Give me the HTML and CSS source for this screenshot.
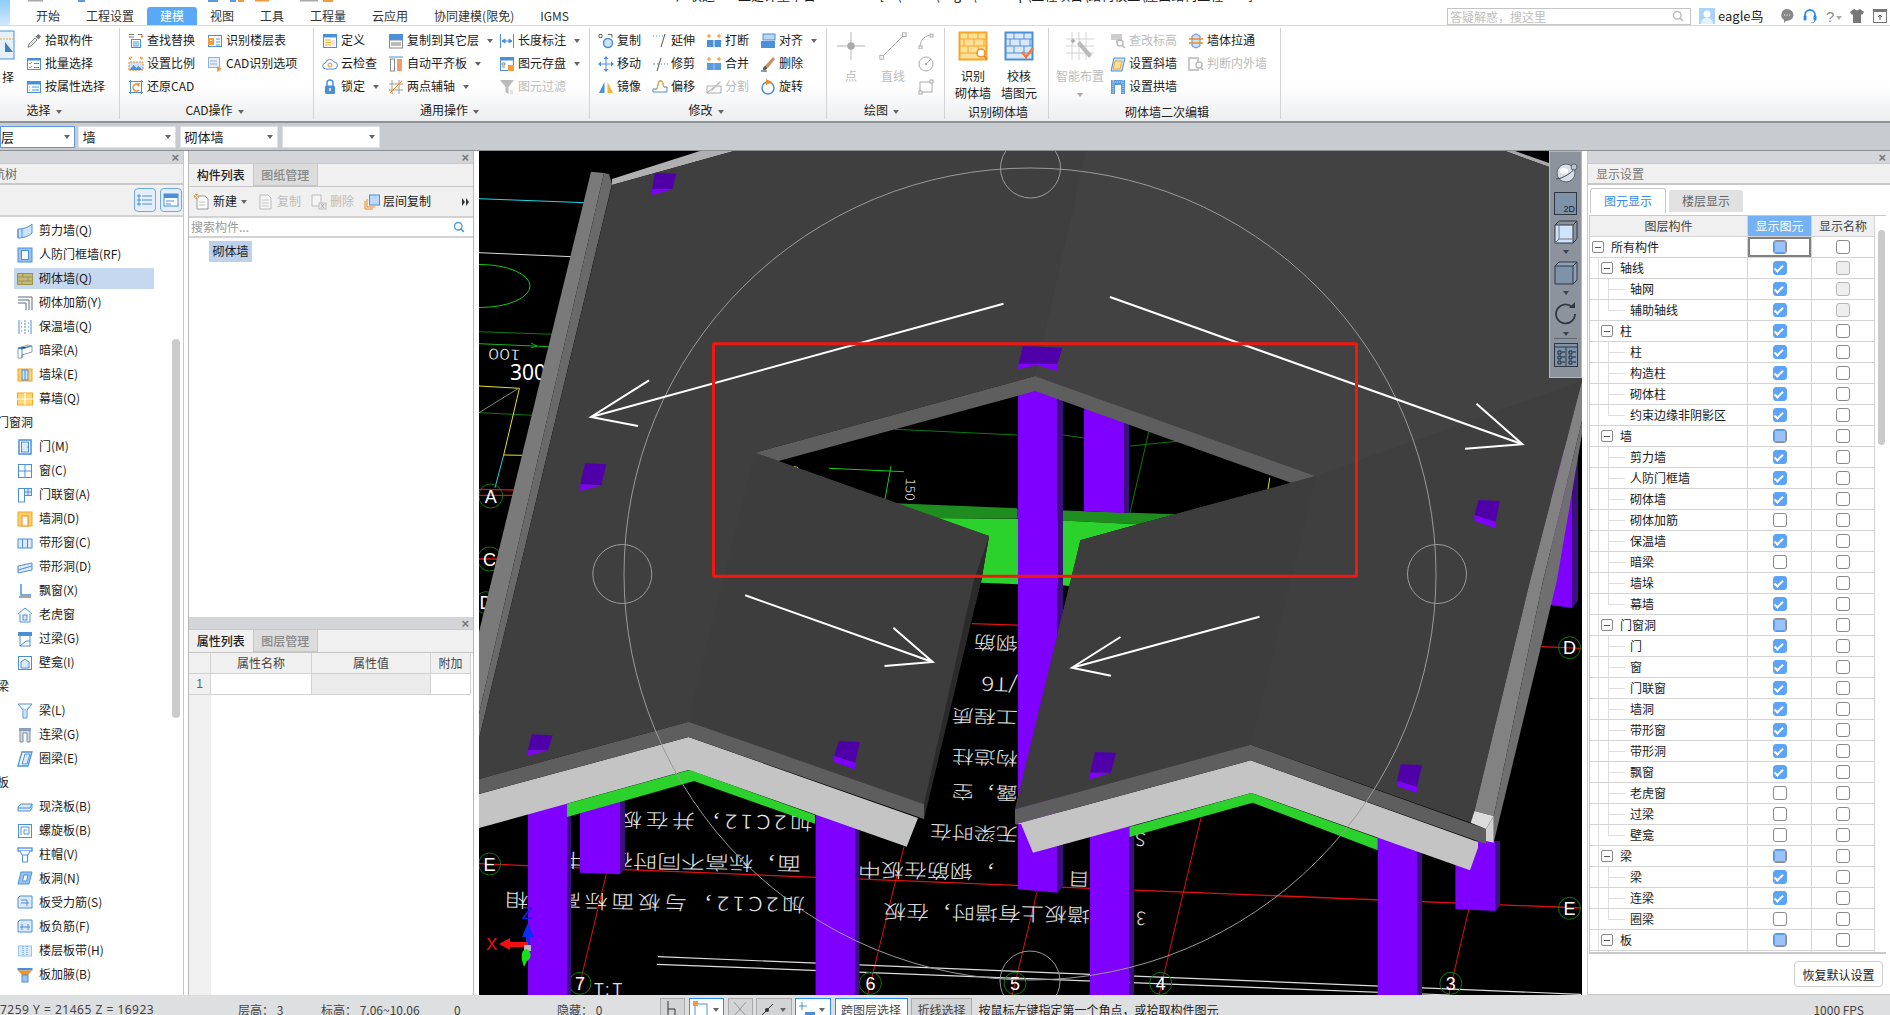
FILE: index.html
```html
<!DOCTYPE html>
<html lang="zh-CN">
<head>
<meta charset="utf-8">
<title>建模</title>
<link rel="stylesheet" href="styles.css">
</head>
<body>
<svg class="defs" xmlns="http://www.w3.org/2000/svg">
<symbol id="pick" viewBox="0 0 16 16"><path d="M2 14.500l1-3.500 6-6 2 2-6 6z" fill="#e8e8e8" stroke="#8a8a8a"/><path d="M9.500 3.500l3-2.500 2.500 2.500-2.500 3z" fill="#777"/></symbol>
<symbol id="batch" viewBox="0 0 16 16"><rect x="1.500" y="2.500" width="13" height="11" fill="#fff" stroke="#4a90d9"/><path d="M1.500 2.500h13v2h-13z" fill="#4a90d9"/><path d="M3 7l1 1 2-2M3 11l1 1 2-2" stroke="#f08a24" fill="none"/><path d="M8 7.500h5M8 11.500h5" stroke="#4a90d9"/></symbol>
<symbol id="attr" viewBox="0 0 16 16"><rect x="1.500" y="2.500" width="13" height="11" fill="#fff" stroke="#4a90d9"/><path d="M1.500 2.500h13v3h-13z" fill="#4a90d9"/><path d="M3 8h1M3 11h1M6 8h7M6 11h7" stroke="#4a90d9"/></symbol>
<symbol id="replace" viewBox="0 0 16 16"><path d="M1 1.500h5M1 4h5M10 1.500h4v3" stroke="#777" fill="none"/><path d="M12.500 3l1.500 2 1.500-2z" fill="#f08a24"/><rect x="3.500" y="6.500" width="9" height="8" fill="#fff" stroke="#4a90d9"/><path d="M5 9h6M5 11h6M5 13h6" stroke="#4a90d9"/></symbol>
<symbol id="scale" viewBox="0 0 16 16"><path d="M1 2h3l-1-1.500M1 2l2 1.500M15 2h-3l1-1.500M15 2l-2 1.500" stroke="#f08a24" fill="none"/><path d="M1 14V6h14v8z" fill="#cfe2f7" stroke="#f08a24" stroke-dasharray="2 1"/><path d="M1.500 14l4-5 3 3 2-2 4 4z" fill="#4a90d9"/></symbol>
<symbol id="restore" viewBox="0 0 16 16"><path d="M2.500 1v14M13.500 1v14M1 2.500h14M1 13.500h14" stroke="#4a90d9"/><path d="M11 6a3.500 3.500 0 1 0 0 5" stroke="#f08a24" stroke-width="1.500" fill="none"/><path d="M8 5l4-1-1 4z" fill="#f08a24"/></symbol>
<symbol id="floortbl" viewBox="0 0 16 16"><rect x="1.500" y="2.500" width="13" height="11" fill="#fff" stroke="#4a90d9"/><rect x="1" y="5" width="6" height="7" fill="#f59a3a"/><path d="M3 7h2v1H3z" fill="#fff"/><path d="M9 6h4M9 9h4M9 12h4" stroke="#4a90d9"/></symbol>
<symbol id="cadopt" viewBox="0 0 16 16"><rect x="1.500" y="1.500" width="11" height="10" fill="#e6eef9" stroke="#8fb2dd"/><path d="M3 5h7M3 8h7" stroke="#8fb2dd"/><path d="M10 10l5 3-5 3z" fill="#f59a3a"/></symbol>
<symbol id="define" viewBox="0 0 16 16"><rect x="1.500" y="1.500" width="13" height="13" fill="#fff" stroke="#4a90d9"/><path d="M1.500 1.500h13v3h-13z" fill="#4a90d9"/><path d="M3 7h6M3 9.500h6M3 12h6" stroke="#f5a623"/><path d="M10 7h3v5h-3z" fill="#fdd"/></symbol>
<symbol id="cloud" viewBox="0 0 16 16"><path d="M4 13a3 3 0 0 1-.500-6 4.500 4.500 0 0 1 8.500-1 3.500 3.500 0 0 1 0 7z" fill="#fff" stroke="#4a90d9"/><circle cx="8" cy="9" r="2" fill="none" stroke="#f08a24"/></symbol>
<symbol id="lock" viewBox="0 0 16 16"><rect x="3" y="6.500" width="10" height="8.500" rx="1.500" fill="#4a90d9"/><path d="M5 7V4a3 3 0 0 1 6 0v3" stroke="#4a90d9" stroke-width="1.500" fill="none"/><rect x="7.300" y="9" width="1.500" height="3" fill="#fff"/></symbol>
<symbol id="copyto" viewBox="0 0 16 16"><rect x="1" y="1" width="14" height="6" fill="#4a90d9"/><rect x="1.500" y="7" width="13" height="8" fill="#fff" stroke="#888"/><rect x="3" y="9" width="10" height="4" fill="#bbb"/></symbol>
<symbol id="alignb" viewBox="0 0 16 16"><path d="M1 1h14" stroke="#4a90d9"/><rect x="2.500" y="3" width="4" height="12" fill="#fff" stroke="#888"/><rect x="9" y="3" width="5" height="12" fill="#f59a6a"/></symbol>
<symbol id="axis2" viewBox="0 0 16 16"><path d="M4 1v14M11 1v14M1 5h14M1 11h14" stroke="#999"/><path d="M2 14L14 2" stroke="#f08a24"/></symbol>
<symbol id="dim" viewBox="0 0 16 16"><path d="M1.500 1v14M14.500 1v14" stroke="#4a90d9"/><path d="M3 8h10M3 8l3-2v4zM13 8l-3-2v4z" stroke="#4a90d9" fill="#4a90d9"/></symbol>
<symbol id="save" viewBox="0 0 16 16"><rect x="1.500" y="1.500" width="13" height="13" fill="#fff" stroke="#4a90d9"/><path d="M1.500 1.500h13v3h-13z" fill="#4a90d9"/><path d="M3 7h3v2H3zM3 11h3" stroke="#888" fill="none"/><rect x="9" y="9" width="6" height="6" fill="#f59a3a"/></symbol>
<symbol id="filter" viewBox="0 0 16 16"><path d="M1 1h14L9.500 8v7l-3-2V8z" fill="#bbb"/><path d="M11 12h3M11 14h3" stroke="#ccc"/></symbol>
<symbol id="copy" viewBox="0 0 16 16"><path d="M1 1.500h3v3H1zM10 1.500h4v3" stroke="#666" fill="none"/><circle cx="10" cy="10" r="4.500" fill="#cfe2f7" stroke="#4a90d9" stroke-width="1.500"/></symbol>
<symbol id="move" viewBox="0 0 16 16"><path d="M8 2v12M2 8h12" stroke="#4a90d9"/><path d="M8 0l2.500 3h-5zM8 16l-2.500-3h5zM0 8l3-2.500v5zM16 8l-3-2.500v5z" fill="#4a90d9"/></symbol>
<symbol id="mirror" viewBox="0 0 16 16"><path d="M1 14L6.500 3v11z" fill="#4a90d9"/><path d="M15 14L9.500 3v11z" fill="#f5b43a"/></symbol>
<symbol id="extend" viewBox="0 0 16 16"><path d="M1 3h1M4 3h1M7 3h1M10 3h1" stroke="#4a90d9"/><path d="M13 1L9 14" stroke="#555"/></symbol>
<symbol id="trim" viewBox="0 0 16 16"><path d="M1 8h2M5 8h2" stroke="#4a90d9"/><path d="M9 2L5 15" stroke="#555"/><path d="M9 8h1M12 8h1M15 8h1" stroke="#4a90d9"/></symbol>
<symbol id="offset" viewBox="0 0 16 16"><path d="M1 10h4l2-8h3l2 6h3v5H1z" fill="#fff" stroke="#4a90d9"/><path d="M3 8h2l2-8h3l2 6h2" stroke="#f5a623" fill="none" transform="translate(0 2)"/></symbol>
<symbol id="brk" viewBox="0 0 16 16"><path d="M1 3h4M3 1v4M11 3h4M13 1v4" stroke="#f08a24"/><rect x="1" y="7" width="6.500" height="7" fill="#4a90d9"/><rect x="8.500" y="7" width="6.500" height="7" fill="#4a90d9"/></symbol>
<symbol id="merge" viewBox="0 0 16 16"><path d="M1 3h4M3 1v4M11 3h4M13 1v4" stroke="#f08a24"/><rect x="1" y="7" width="14" height="7" fill="#5a9be0"/><path d="M8 7v7" stroke="#9cc3ee"/></symbol>
<symbol id="split" viewBox="0 0 16 16"><path d="M1 7h14v7H1zM1 14L8 8" stroke="#aaa" fill="none"/><path d="M5 11L14 2l1 1-9 9z" fill="#bbb"/></symbol>
<symbol id="alignx" viewBox="0 0 16 16"><rect x="3" y="1" width="12" height="6" fill="#bcd5f2" stroke="#4a90d9"/><rect x="1" y="8" width="14" height="7" fill="#4a90d9"/></symbol>
<symbol id="del" viewBox="0 0 16 16"><path d="M1 15h6" stroke="#333"/><path d="M13 1l2 2-7 9-3-2z" fill="#c89060"/><path d="M3 14c0-3 1-4 2.500-4l2 2c-1 1.500-2 2-4.500 2z" fill="#555"/></symbol>
<symbol id="rotate" viewBox="0 0 16 16"><circle cx="8" cy="9" r="6" fill="none" stroke="#4a90d9" stroke-width="1.500"/><path d="M6 0l6 3-6 3z" fill="#f08a24"/></symbol>
<symbol id="pointd" viewBox="0 0 32 32"><path d="M16 1v30M1 16h30" stroke="#ccc" stroke-width="1.500"/><circle cx="16" cy="16" r="4" fill="#aaa"/></symbol>
<symbol id="lined" viewBox="0 0 32 32"><path d="M4 28L28 4" stroke="#aaa"/><rect x="2" y="26" width="4" height="4" fill="#fff" stroke="#aaa"/><rect x="26" y="2" width="4" height="4" fill="#fff" stroke="#aaa"/></symbol>
<symbol id="arcd" viewBox="0 0 16 16"><path d="M2 14C2 7 7 2 14 2" stroke="#aaa" fill="none"/><rect x="1" y="13" width="3" height="3" fill="#fff" stroke="#aaa"/><rect x="12" y="1" width="3" height="3" fill="#fff" stroke="#aaa"/></symbol>
<symbol id="circd" viewBox="0 0 16 16"><circle cx="8" cy="8" r="7" fill="none" stroke="#aaa"/><circle cx="8" cy="8" r="1.200" fill="#aaa"/><path d="M8 8l5-5" stroke="#aaa"/></symbol>
<symbol id="rectd" viewBox="0 0 16 16"><rect x="2" y="3" width="12" height="10" fill="none" stroke="#aaa"/><rect x="1" y="12" width="3" height="3" fill="#fff" stroke="#aaa"/><rect x="12" y="1" width="3" height="3" fill="#fff" stroke="#aaa"/></symbol>
<symbol id="brickfind" viewBox="0 0 30 30"><rect x="1.500" y="1.500" width="27" height="27" fill="#ffe09a" stroke="#f5a623" stroke-width="2"/><path d="M1 8h28M1 15h28M1 22h28M10 1v7M20 1v7M6 8v7M16 8v7M26 8v7M10 15v7M20 15v7" stroke="#f5a623"/><circle cx="23" cy="22" r="4" fill="#fff" stroke="#f08a24" stroke-width="1.500"/><path d="M26 25l3 3" stroke="#f08a24" stroke-width="2"/></symbol>
<symbol id="brickchk" viewBox="0 0 30 30"><rect x="1.500" y="1.500" width="27" height="27" fill="#dbe8f9" stroke="#4a90d9" stroke-width="2"/><path d="M1 8h28M1 15h28M1 22h28M10 1v7M20 1v7M6 8v7M16 8v7M26 8v7M10 15v7M20 15v7" stroke="#4a90d9"/><path d="M18 21l4 5 7-9" stroke="#f5793a" stroke-width="2.500" fill="none"/></symbol>
<symbol id="smart" viewBox="0 0 30 30"><path d="M7 1v28M14 1v28M21 1v28M1 8h28M1 15h28M1 22h28" stroke="#d4d4d4"/><path d="M12 13l12 14 3-3L15 10z" fill="#bbb"/><path d="M8 7l1 2 2 1-2 1-1 2-1-2-2-1 2-1z" fill="#aaa"/></symbol>
<symbol id="elev" viewBox="0 0 16 16"><path d="M1 1h11v6H8l-2 3V7H1z" fill="#ccc"/><circle cx="10" cy="10" r="3" fill="#fff" stroke="#bbb" stroke-width="1.500"/><path d="M12 12l3 3" stroke="#bbb" stroke-width="1.500"/></symbol>
<symbol id="slant" viewBox="0 0 16 16"><path d="M4 2h11l-3 13H1z" fill="#cfe2f7" stroke="#4a90d9"/><path d="M5 5h7l-2 8H3z" fill="#ffe09a" stroke="#f5a623"/></symbol>
<symbol id="arch" viewBox="0 0 16 16"><path d="M1 15V1h14v14h-4V6H5v9z" fill="#5a9be0"/><path d="M3 3h10M3 1v14M13 1v14" stroke="#d8e8fa" stroke-dasharray="1 1"/></symbol>
<symbol id="through" viewBox="0 0 16 16"><path d="M4 3l4-2 4 2v10l-4 2-4-2z" fill="#cfe2f7" stroke="#4a90d9"/><path d="M1 6h14M1 10h14" stroke="#f08a24" stroke-width="1.500"/></symbol>
<symbol id="inout" viewBox="0 0 16 16"><path d="M1 2h9v12H1z" fill="none" stroke="#c8c8c8" stroke-width="2"/><circle cx="11" cy="9" r="3" fill="#fff" stroke="#bbb" stroke-width="1.500"/><path d="M13 11l2 3" stroke="#bbb" stroke-width="1.500"/></symbol>

<symbol id="l-shear" viewBox="0 0 16 16"><path d="M1 6c4 0 10-1 14-5v9c-4 4-10 5-14 5z" fill="#cfe2f7" stroke="#4a90d9"/><path d="M1 6v9M5 6v8" stroke="#4a90d9"/></symbol>
<symbol id="l-rf" viewBox="0 0 16 16"><rect x="1" y="1" width="14" height="14" fill="#9cc2ee" stroke="#4a90d9"/><rect x="4.500" y="3.500" width="7" height="9" fill="#fff" stroke="#4a90d9"/></symbol>
<symbol id="l-mas" viewBox="0 0 16 16"><rect x="0.500" y="2.500" width="15" height="11" fill="#c4ba78" stroke="#9a9252"/><path d="M0 6h16M0 10h16M6 3v3M11 6v4M5 10v3" stroke="#9a9252"/></symbol>
<symbol id="l-bar" viewBox="0 0 16 16"><path d="M1 2h14v13M1 5h11v10M1 8h8v7" stroke="#5a6b80" fill="none"/></symbol>
<symbol id="l-ins" viewBox="0 0 16 16"><path d="M2 1v14M14 1v14" stroke="#4a90d9"/><path d="M8 1v14" stroke="#4a90d9" stroke-dasharray="2 1"/><path d="M4 4h1M11 4h1M4 8h1M11 8h1M4 12h1M11 12h1" stroke="#4a90d9"/></symbol>
<symbol id="l-hb" viewBox="0 0 16 16"><path d="M1 15V5l10-3 4 1v6L5 12v3z" fill="#fff" stroke="#8a9fb8"/><path d="M1 5l4 1 10-3M5 6v9" stroke="#4a90d9"/></symbol>
<symbol id="l-pier" viewBox="0 0 16 16"><rect x="1" y="2" width="14" height="12" fill="#ffd06a" stroke="#f5a623"/><rect x="5" y="3" width="6" height="10" fill="#cfe2f7" stroke="#4a90d9"/><path d="M8 3v10" stroke="#4a90d9"/></symbol>
<symbol id="l-cur" viewBox="0 0 16 16"><rect x="0.500" y="2" width="15" height="12" fill="#ffd76e" stroke="#f5a623"/><path d="M0 8h16M8 2v12" stroke="#fff" stroke-width="1.200"/></symbol>
<symbol id="l-door" viewBox="0 0 16 16"><rect x="2" y="1" width="12" height="14" fill="#fff" stroke="#4a90d9" stroke-width="1.500"/><rect x="4.500" y="3" width="7" height="10" fill="#dce9f8" stroke="#4a90d9"/><path d="M10 8h1" stroke="#4a90d9"/></symbol>
<symbol id="l-win" viewBox="0 0 16 16"><rect x="1.500" y="1.500" width="13" height="13" fill="#fff" stroke="#4a90d9"/><path d="M8 1v14M1 8h14" stroke="#4a90d9"/></symbol>
<symbol id="l-dw" viewBox="0 0 16 16"><rect x="1.500" y="1.500" width="6" height="13.500" fill="#fff" stroke="#4a90d9"/><rect x="7.500" y="1.500" width="7" height="7" fill="#dce9f8" stroke="#4a90d9"/><path d="M11 1v7M7 5h8" stroke="#4a90d9"/></symbol>
<symbol id="l-hole" viewBox="0 0 16 16"><rect x="1" y="1" width="14" height="14" fill="#ffd06a" stroke="#f5a623"/><rect x="5" y="5" width="6" height="10" fill="#fff" stroke="#f08a24"/></symbol>
<symbol id="l-sw" viewBox="0 0 16 16"><rect x="1" y="4" width="14" height="9" fill="#dce9f8" stroke="#4a90d9"/><path d="M5.500 4v9M10.500 4v9" stroke="#4a90d9"/></symbol>
<symbol id="l-sh" viewBox="0 0 16 16"><path d="M1 7l14-3v7L1 14z" fill="#dce9f8" stroke="#4a90d9"/><path d="M1 11l14-4" stroke="#4a90d9"/></symbol>
<symbol id="l-bay" viewBox="0 0 16 16"><path d="M4 1v11h10" stroke="#4a90d9" stroke-width="1.500" fill="none"/><path d="M2 14h12" stroke="#888" stroke-width="1.500"/></symbol>
<symbol id="l-dor" viewBox="0 0 16 16"><path d="M1 7l7-6 7 6M3 7v8h10V7" stroke="#4a90d9" fill="#fff"/><rect x="6" y="8" width="4" height="5" fill="#dce9f8" stroke="#4a90d9"/></symbol>
<symbol id="l-lin" viewBox="0 0 16 16"><rect x="1" y="1" width="14" height="4" fill="#4a90d9"/><path d="M3 5v10h10V5" stroke="#4a90d9" fill="#fff"/><path d="M3 15l6-5h4" stroke="#4a90d9" fill="none"/></symbol>
<symbol id="l-nic" viewBox="0 0 16 16"><rect x="1.500" y="1.500" width="13" height="13" fill="#fff" stroke="#4a90d9"/><path d="M4 13V7l4-3 4 3v6z" fill="#dce9f8" stroke="#4a90d9"/></symbol>
<symbol id="l-bm" viewBox="0 0 16 16"><path d="M1 1h14l-5 6v8H6V7z" fill="#fff" stroke="#4a90d9"/><path d="M3 3l5 4M13 3L8 7M8 7v8" stroke="#9cc2ee"/></symbol>
<symbol id="l-lb" viewBox="0 0 16 16"><rect x="2" y="1" width="12" height="3" fill="#8a9fb8"/><path d="M3 4v11h3V6h4v9h3V4" fill="#cfd7e0" stroke="#7d8da0"/></symbol>
<symbol id="l-rb" viewBox="0 0 16 16"><path d="M5 1h10l-4 14H1z" fill="#fff" stroke="#4a90d9" stroke-width="1.300"/><path d="M8 3h5l-3 10H5z" fill="#dce9f8" stroke="#4a90d9"/></symbol>
<symbol id="l-sl" viewBox="0 0 16 16"><path d="M1 8l3-3h11v4l-2 3H1z" fill="#dce9f8" stroke="#4a90d9"/><path d="M1 9h12l2-4" stroke="#4a90d9" fill="none"/></symbol>
<symbol id="l-sp" viewBox="0 0 16 16"><rect x="1.500" y="1.500" width="13" height="13" fill="#fff" stroke="#4a90d9"/><path d="M4 12V4h8v7H7V7h3" stroke="#4a90d9" fill="none"/></symbol>
<symbol id="l-cap" viewBox="0 0 16 16"><rect x="1" y="1" width="14" height="3" fill="#fff" stroke="#4a90d9" stroke-width="1.300"/><path d="M3 4l2 4h6l2-4M5.500 8v7h5V8" stroke="#4a90d9" fill="#fff"/></symbol>
<symbol id="l-shl" viewBox="0 0 16 16"><path d="M4 1h11l-3 12H1z" fill="#9cc2ee" stroke="#4a90d9"/><path d="M7 4h4l-1.500 6H5.500z" fill="#fff" stroke="#4a90d9"/></symbol>
<symbol id="l-sb" viewBox="0 0 16 16"><path d="M3 1h12v12H1V3z" fill="#dce9f8" stroke="#4a90d9"/><path d="M4 8h8M10 5v6M4 5h6" stroke="#4a90d9" fill="none"/></symbol>
<symbol id="l-nb" viewBox="0 0 16 16"><path d="M3 1h12v12H1V3z" fill="#dce9f8" stroke="#4a90d9"/><path d="M3 8h10M5 5v6M11 5v6" stroke="#4a90d9" fill="none"/></symbol>
<symbol id="l-bd" viewBox="0 0 16 16"><rect x="1.500" y="3" width="13" height="10" fill="#dce9f8" stroke="#9cc2ee"/><path d="M6 3v10M10 3v10" stroke="#4a90d9" stroke-dasharray="1 1"/></symbol>
<symbol id="l-hn" viewBox="0 0 16 16"><rect x="0.500" y="1" width="15" height="2.500" fill="#4a90d9"/><path d="M1 3.500h14L11 8H5z" fill="#f5921e"/><rect x="5" y="8" width="6" height="7" fill="#9cc2ee" stroke="#4a90d9"/></symbol>

<symbol id="m-new" viewBox="0 0 16 16"><path d="M3 2h8l3 3v10H3z" fill="#fff" stroke="#999"/><path d="M5 8h6M5 11h6" stroke="#bbb"/><path d="M0 0h5v5H0z" fill="#f59a3a"/><path d="M0 0l5 5M5 0L0 5" stroke="#fff"/></symbol>
<symbol id="m-copy" viewBox="0 0 16 16"><path d="M2 1h8l3 3v11H2z" fill="#f5f5f5" stroke="#bbb"/><path d="M4 6h7M4 9h7M4 12h7" stroke="#c8c8c8"/></symbol>
<symbol id="m-del" viewBox="0 0 16 16"><path d="M1 1h9v11H1z" fill="#f5f5f5" stroke="#bbb"/><rect x="8" y="9" width="7" height="6" fill="#eee" stroke="#bbb"/><path d="M10 10l3 4M13 10l-3 4" stroke="#aaa"/></symbol>
<symbol id="m-fc" viewBox="0 0 16 16"><path d="M1 7v8h8M3 5v8h8" stroke="#f08a24" fill="none"/><rect x="5.500" y="1" width="10" height="10" fill="#bcd8fb" stroke="#4a90d9"/></symbol>
<symbol id="mag" viewBox="0 0 16 16"><circle cx="7" cy="7" r="5" fill="none" stroke="currentColor" stroke-width="1.800"/><path d="M10.500 10.500l4 4" stroke="currentColor" stroke-width="2"/></symbol>
</svg>

<div class="app-btn"></div>
<div class="titlebar">
  <svg class="qa" viewBox="0 0 340 7"><g fill="#a9a9a9"><rect x="28" y="0" width="15" height="1.500"/><rect x="300" y="0" width="18" height="1.500"/></g><g fill="#5a9be0"><rect x="78" y="0" width="7" height="2"/><rect x="208" y="0" width="10" height="2"/><rect x="230" y="0" width="6" height="2"/></g><g fill="#f59a3a"><rect x="238" y="0" width="6" height="2"/><rect x="255" y="0" width="14" height="1.500"/><rect x="323" y="0" width="10" height="2"/></g></svg>
  <span class="title-text">广联达BIM土建计量平台 GTJ2018 - [C:\Users\eagle\Desktop\工程项目\结构模型\屋面结构工程.GTJ]</span>
</div>

<div class="tabbar">
  <nav class="tabs">
    <span class="tab">开始</span><span class="tab">工程设置</span><span class="tab on">建模</span><span class="tab">视图</span><span class="tab">工具</span><span class="tab">工程量</span><span class="tab">云应用</span><span class="tab">协同建模(限免)</span><span class="tab">IGMS</span>
  </nav>
  <div class="topright">
    <div class="qsearch"><span>答疑解惑，搜这里</span><svg class="ic12 gray"><use href="#mag"/></svg></div>
    <svg class="avatar" viewBox="0 0 16 16"><rect width="16" height="16" fill="#a9d3fb"/><circle cx="8" cy="6" r="3.500" fill="#fff"/><path d="M2 16c0-5 3-6 6-6s6 1 6 6z" fill="#e3f1fe"/></svg>
    <span class="uname">eagle鸟</span>
    <svg class="tico chat" viewBox="0 0 14 14"><path d="M7 0a7 6 0 1 1-1 12l-2 2v-3A6 6 0 0 1 7 0z" fill="#888"/><path d="M4 6h1M6.500 6h1M9 6h1" stroke="#fff"/></svg>
    <svg class="tico" viewBox="0 0 14 14"><path d="M2 8V6a5 5 0 0 1 10 0v2" stroke="#2e8cf0" stroke-width="1.800" fill="none"/><rect x="0.500" y="6.500" width="3" height="5" rx="1" fill="#2e8cf0"/><rect x="10.500" y="6.500" width="3" height="5" rx="1" fill="#2e8cf0"/><path d="M12 11c0 2-2 3-4 3" stroke="#2e8cf0" fill="none"/></svg>
    <span class="help">?<i class="car small"></i></span>
    <svg class="tico" viewBox="0 0 14 14"><path d="M4 0l3 1.500L10 0l4 3-2 3-1-1v9H3V5L2 6 0 3z" fill="#777"/></svg>
    <svg class="tico lastico" viewBox="0 0 14 14"><rect x="0.500" y="0.500" width="13" height="13" fill="#fff" stroke="#777"/><path d="M0 0h14v3H0z" fill="#777"/><path d="M7 11V6M5 8l2-2 2 2" stroke="#555" fill="none"/></svg>
  </div>
</div>

<div class="ribbon">
  <section class="grp g0">
    <div class="gbody">
      <div class="big clipped"><svg class="cbig" viewBox="0 0 15 30"><rect x="-6" y="1" width="20" height="28" fill="#e6f0fb" stroke="#4a90d9"/><path d="M0 9h14" stroke="#f5a623" stroke-dasharray="2 1"/><path d="M5 12l8 10H5z" fill="#3f7fc4"/></svg><span class="biglbl clipt">择</span></div>
      <div class="col w94">
        <div class="row"><svg class="ic"><use href="#pick"/></svg>拾取构件</div>
        <div class="row"><svg class="ic"><use href="#batch"/></svg>批量选择</div>
        <div class="row"><svg class="ic"><use href="#attr"/></svg>按属性选择</div>
      </div>
    </div>
    <div class="glabel lbl0">选择<i class="car"></i></div>
  </section>
  <section class="grp g1">
    <div class="gbody">
      <div class="col w79">
        <div class="row"><svg class="ic"><use href="#replace"/></svg>查找替换</div>
        <div class="row"><svg class="ic"><use href="#scale"/></svg>设置比例</div>
        <div class="row"><svg class="ic"><use href="#restore"/></svg>还原CAD</div>
      </div>
      <div class="col">
        <div class="row"><svg class="ic"><use href="#floortbl"/></svg>识别楼层表</div>
        <div class="row"><svg class="ic"><use href="#cadopt"/></svg>CAD识别选项</div>
      </div>
    </div>
    <div class="glabel">CAD操作<i class="car"></i></div>
  </section>
  <section class="grp g2">
    <div class="gbody">
      <div class="col w66">
        <div class="row"><svg class="ic"><use href="#define"/></svg>定义</div>
        <div class="row"><svg class="ic"><use href="#cloud"/></svg>云检查</div>
        <div class="row"><svg class="ic"><use href="#lock"/></svg>锁定<i class="car"></i></div>
      </div>
      <div class="col w111">
        <div class="row"><svg class="ic"><use href="#copyto"/></svg>复制到其它层<i class="car"></i></div>
        <div class="row"><svg class="ic"><use href="#alignb"/></svg>自动平齐板<i class="car"></i></div>
        <div class="row"><svg class="ic"><use href="#axis2"/></svg>两点辅轴<i class="car"></i></div>
      </div>
      <div class="col">
        <div class="row"><svg class="ic"><use href="#dim"/></svg>长度标注<i class="car"></i></div>
        <div class="row"><svg class="ic"><use href="#save"/></svg>图元存盘<i class="car"></i></div>
        <div class="row dis"><svg class="ic"><use href="#filter"/></svg>图元过滤</div>
      </div>
    </div>
    <div class="glabel">通用操作<i class="car"></i></div>
  </section>
  <section class="grp g3">
    <div class="gbody">
      <div class="col w54">
        <div class="row"><svg class="ic"><use href="#copy"/></svg>复制</div>
        <div class="row"><svg class="ic"><use href="#move"/></svg>移动</div>
        <div class="row"><svg class="ic"><use href="#mirror"/></svg>镜像</div>
      </div>
      <div class="col w54">
        <div class="row"><svg class="ic"><use href="#extend"/></svg>延伸</div>
        <div class="row"><svg class="ic"><use href="#trim"/></svg>修剪</div>
        <div class="row"><svg class="ic"><use href="#offset"/></svg>偏移</div>
      </div>
      <div class="col w54">
        <div class="row"><svg class="ic"><use href="#brk"/></svg>打断</div>
        <div class="row"><svg class="ic"><use href="#merge"/></svg>合并</div>
        <div class="row dis"><svg class="ic"><use href="#split"/></svg>分割</div>
      </div>
      <div class="col">
        <div class="row"><svg class="ic"><use href="#alignx"/></svg>对齐<i class="car"></i></div>
        <div class="row"><svg class="ic"><use href="#del"/></svg>删除</div>
        <div class="row"><svg class="ic"><use href="#rotate"/></svg>旋转</div>
      </div>
    </div>
    <div class="glabel">修改<i class="car"></i></div>
  </section>
  <section class="grp g4">
    <div class="gbody">
      <div class="big w38 dis"><svg class="ic30"><use href="#pointd"/></svg><span class="biglbl">点</span></div>
      <div class="big w38 dis"><svg class="ic30"><use href="#lined"/></svg><span class="biglbl">直线</span></div>
      <div class="col smallcol">
        <div class="row"><svg class="ic"><use href="#arcd"/></svg></div>
        <div class="row"><svg class="ic"><use href="#circd"/></svg></div>
        <div class="row"><svg class="ic"><use href="#rectd"/></svg></div>
      </div>
    </div>
    <div class="glabel lbl4">绘图<i class="car"></i></div>
  </section>
  <section class="grp g5">
    <div class="gbody">
      <div class="big w46"><svg class="ic30"><use href="#brickfind"/></svg><span class="biglbl">识别<br>砌体墙</span></div>
      <div class="big w46"><svg class="ic30"><use href="#brickchk"/></svg><span class="biglbl">校核<br>墙图元</span></div>
    </div>
    <div class="glabel">识别砌体墙</div>
  </section>
  <section class="grp g6">
    <div class="gbody">
      <div class="big w50 dis"><svg class="ic30"><use href="#smart"/></svg><span class="biglbl">智能布置<br><i class="car lone"></i></span></div>
      <div class="col w78 ml5">
        <div class="row dis"><svg class="ic"><use href="#elev"/></svg>查改标高</div>
        <div class="row"><svg class="ic"><use href="#slant"/></svg>设置斜墙</div>
        <div class="row"><svg class="ic"><use href="#arch"/></svg>设置拱墙</div>
      </div>
      <div class="col">
        <div class="row"><svg class="ic"><use href="#through"/></svg>墙体拉通</div>
        <div class="row dis"><svg class="ic"><use href="#inout"/></svg>判断内外墙</div>
      </div>
    </div>
    <div class="glabel">砌体墙二次编辑</div>
  </section>
</div>

<div class="toolbar">
  <div class="sel first">层<i class="car"></i></div>
  <div class="sel">墙<i class="car"></i></div>
  <div class="sel">砌体墙<i class="car"></i></div>
  <div class="sel"><i class="car"></i></div>
</div>

<main class="main">
  <aside class="nav">
    <div class="ptitle"><span class="x">×</span></div>
    <div class="phead"><span class="navname">导航树</span></div>
    <div class="navtools">
      <span class="vbtn"><svg class="ic" viewBox="0 0 16 16"><path d="M1 3h2v2H1zM1 7h2v2H1zM1 11h2v2H1zM5 4h10M5 8h10M5 12h10" stroke="#4a90d9" fill="none"/></svg></span>
      <span class="vbtn"><svg class="ic" viewBox="0 0 16 16"><rect x="1" y="2" width="14" height="12" fill="#fff" stroke="#4a90d9"/><path d="M1 2h14v4H1z" fill="#4a90d9"/><path d="M3 9h8M3 12h5" stroke="#4a90d9"/></svg></span>
    </div>
    <div class="navlist">
      <div class="ni"><svg class="ic"><use href="#l-shear"/></svg>剪力墙(Q)</div>
      <div class="ni"><svg class="ic"><use href="#l-rf"/></svg>人防门框墙(RF)</div>
      <div class="ni sel-item"><svg class="ic"><use href="#l-mas"/></svg>砌体墙(Q)</div>
      <div class="ni"><svg class="ic"><use href="#l-bar"/></svg>砌体加筋(Y)</div>
      <div class="ni"><svg class="ic"><use href="#l-ins"/></svg>保温墙(Q)</div>
      <div class="ni"><svg class="ic"><use href="#l-hb"/></svg>暗梁(A)</div>
      <div class="ni"><svg class="ic"><use href="#l-pier"/></svg>墙垛(E)</div>
      <div class="ni"><svg class="ic"><use href="#l-cur"/></svg>幕墙(Q)</div>
      <div class="ni cat">门窗洞</div>
      <div class="ni"><svg class="ic"><use href="#l-door"/></svg>门(M)</div>
      <div class="ni"><svg class="ic"><use href="#l-win"/></svg>窗(C)</div>
      <div class="ni"><svg class="ic"><use href="#l-dw"/></svg>门联窗(A)</div>
      <div class="ni"><svg class="ic"><use href="#l-hole"/></svg>墙洞(D)</div>
      <div class="ni"><svg class="ic"><use href="#l-sw"/></svg>带形窗(C)</div>
      <div class="ni"><svg class="ic"><use href="#l-sh"/></svg>带形洞(D)</div>
      <div class="ni"><svg class="ic"><use href="#l-bay"/></svg>飘窗(X)</div>
      <div class="ni"><svg class="ic"><use href="#l-dor"/></svg>老虎窗</div>
      <div class="ni"><svg class="ic"><use href="#l-lin"/></svg>过梁(G)</div>
      <div class="ni"><svg class="ic"><use href="#l-nic"/></svg>壁龛(I)</div>
      <div class="ni cat">梁</div>
      <div class="ni"><svg class="ic"><use href="#l-bm"/></svg>梁(L)</div>
      <div class="ni"><svg class="ic"><use href="#l-lb"/></svg>连梁(G)</div>
      <div class="ni"><svg class="ic"><use href="#l-rb"/></svg>圈梁(E)</div>
      <div class="ni cat">板</div>
      <div class="ni"><svg class="ic"><use href="#l-sl"/></svg>现浇板(B)</div>
      <div class="ni"><svg class="ic"><use href="#l-sp"/></svg>螺旋板(B)</div>
      <div class="ni"><svg class="ic"><use href="#l-cap"/></svg>柱帽(V)</div>
      <div class="ni"><svg class="ic"><use href="#l-shl"/></svg>板洞(N)</div>
      <div class="ni"><svg class="ic"><use href="#l-sb"/></svg>板受力筋(S)</div>
      <div class="ni"><svg class="ic"><use href="#l-nb"/></svg>板负筋(F)</div>
      <div class="ni"><svg class="ic"><use href="#l-bd"/></svg>楼层板带(H)</div>
      <div class="ni"><svg class="ic"><use href="#l-hn"/></svg>板加腋(B)</div>
      <div class="scrollthumb"></div>
    </div>
  </aside>

  <section class="mid">
    <div class="msec top">
      <div class="ptitle"><span class="x">×</span></div>
      <div class="mtabs"><span class="mtab on">构件列表</span><span class="mtab">图纸管理</span></div>
      <div class="mtools">
        <span class="mt"><svg class="ic"><use href="#m-new"/></svg>新建<i class="car"></i></span>
        <span class="mt dis"><svg class="ic"><use href="#m-copy"/></svg>复制</span>
        <span class="mt dis"><svg class="ic"><use href="#m-del"/></svg>删除</span>
        <span class="mt"><svg class="ic"><use href="#m-fc"/></svg>层间复制</span>
        <span class="more"></span>
      </div>
      <div class="msearch"><span>搜索构件...</span><svg class="ic12 blue"><use href="#mag"/></svg></div>
      <div class="mlist"><span class="mitem">砌体墙</span></div>
    </div>
    <div class="msec bot">
      <div class="ptitle"><span class="x">×</span></div>
      <div class="mtabs"><span class="mtab on">属性列表</span><span class="mtab">图层管理</span></div>
      <div class="ptable">
        <div class="pr ph"><span></span><span>属性名称</span><span>属性值</span><span>附加</span></div>
        <div class="pr pb"><span class="rn">1</span><span></span><span class="grayc"></span><span></span></div>
      </div>
    </div>
  </section>

  <section class="canvas">
    <svg class="scene" viewBox="479 150 1103 845" xmlns="http://www.w3.org/2000/svg">
      <rect x="479" y="150" width="1103" height="845" fill="#000"/>
      <!-- CAD drawing under the model -->
      <g fill="none">
        <path d="M479 197.700L585 201.700" stroke="#20d8e8"/>
        <path d="M479 251.700L572 255.700" stroke="#ddd"/>
        <ellipse cx="480" cy="285" rx="50" ry="21.500" stroke="#14c814"/>
        <path d="M479 330.700L553 333.300M479 411.700L533.600 414.300" stroke="#0b7a0b"/>
        <path d="M479 342.700L549 345.700M531 342L537 345L531 347" stroke="#14b814"/>
        <path d="M479 385L519.400 387.300L503.700 454L522 454.300" stroke="#e8e020"/>
        <path d="M503.700 454L495 486.700" stroke="#20d8e8"/>
        <path d="M519 387L479 411.700" stroke="#888"/>
        <path d="M479 488.300L514.400 489M479 494.300L513.700 494.300M479 558L497 558" stroke="#e01010" stroke-width="1.300"/>
        <path d="M479 862.700L1581 907" stroke="#e01010" stroke-width="1.300"/>
        <path d="M971.800 622.700L1080 626M1541.500 645.700L1581 647.300" stroke="#e01010" stroke-width="1.300"/>
        <path d="M606.300 873.300L580 982M904 845.700L867.300 995M1036.800 891.700L1012 995M1201 816.700L1158.800 995M1468.800 908.300L1448.500 995" stroke="#e01010"/>
        <path d="M658 955.700L1581 993.300M657 963.300L1450 994" stroke="#ddd" stroke-width="1.200"/>
        <path d="M895 428.300L1017.700 434M1057 433L1084 437M1130 445L1180 440M1149 430L1130 511.700" stroke="#0b7a0b"/>
        <path d="M829 467.300L904 470.700M891 465L885 498" stroke="#14d014"/>
        <path d="M1269.800 476.700L1268 488.300M793.800 465.500L798 466.500" stroke="#e8e020"/>
      </g>
      <g class="bub">
        <circle cx="490.700" cy="495" r="12"/><circle cx="489.600" cy="558" r="12"/><circle cx="486" cy="601.700" r="11"/><circle cx="489.600" cy="863" r="11"/>
        <circle cx="1569.500" cy="646.700" r="11"/><circle cx="1569.500" cy="907.300" r="11"/>
        <circle cx="580" cy="982.300" r="11"/><circle cx="870.400" cy="982.300" r="11"/><circle cx="1015" cy="982.300" r="11"/><circle cx="1160.700" cy="982.300" r="11"/><circle cx="1450.800" cy="982.300" r="11"/>
      </g>
      <g class="bubt">
        <text x="490.700" y="502">A</text><text x="489.600" y="565">C</text><text x="486" y="608">D</text><text x="489.600" y="870">E</text><text x="1569.500" y="653">D</text><text x="1569.500" y="914">E</text>
        <text x="580" y="989">7</text><text x="870.400" y="989">6</text><text x="1015" y="989">5</text><text x="1160.700" y="989">4</text><text x="1450.800" y="989">3</text>
      </g>
      <text class="dim3000" x="510" y="379">3000</text>
      <text class="up small" transform="translate(521 349) rotate(182) scale(1.450 1)">100</text>
      <text class="up small" transform="translate(906 477) rotate(92) scale(1 .9)">150</text>
      <g class="up">
        <text transform="translate(813 815) rotate(181) scale(1.150 .95)" letter-spacing="3">加2C12，并在板中</text>
        <text transform="translate(801 856) rotate(181) scale(1.200 .95)">面，标高不同时在板中</text>
        <text transform="translate(996 864) rotate(181) scale(1.150 .95)">，钢筋在板中</text>
        <text transform="translate(805 897) rotate(181) scale(1.150 .95)" letter-spacing="3">加2C12，与板面标高与相</text>
        <text transform="translate(1090 907) rotate(181) scale(1.150 .95)">墙板上有墙时，在板</text>
        <text transform="translate(1018 636) rotate(182) scale(1.100 .9)">钢筋</text>
        <text transform="translate(1018 677) rotate(182) scale(1.200 .95)">/T6</text>
        <text transform="translate(1018 710) rotate(182) scale(1.100 .9)">工程质</text>
        <text transform="translate(1018 751) rotate(182) scale(1.100 .9)">构造柱</text>
        <text transform="translate(1018 786) rotate(182) scale(1.100 .9)">露，空</text>
        <text transform="translate(1018 827) rotate(182) scale(1.100 .9)">无梁时在</text>
        <text transform="translate(1090 872) rotate(182) scale(1.100 .9)">目</text>
        <text transform="translate(1146 832) rotate(182) scale(.9 .9)">S</text>
        <text transform="translate(1146 911) rotate(182) scale(.9 .9)">3</text>
      </g>
      <text class="tt" x="594" y="994">T;T</text>
      <!-- green beam seen through the opening -->
      <path d="M895 502.300L1017.700 507.300L1017.700 517.700L935 517z" fill="#1e8c1e"/>
      <path d="M930 517L1018 518L1018 583.300L981 581.700L989 535z" fill="#2cd22c"/>
      <path d="M1057 509.300L1176 513.300L1137.800 523.300L1057 519.300z" fill="#1e8c1e"/>
      <path d="M1057 519.300L1137.800 523.300L1080.400 539.300L1070.800 585L1057 584z" fill="#2cd22c"/>
      <!-- columns -->
      <g class="cols">
        <path d="M1084 406.700L1124.400 421.700L1124.400 512L1084 510z"/>
        <path d="M1018 385H1057.400V891.700L1018 888.300z"/>
        <path d="M528 800H567V995H528zM580 800H620V873.300L580 871.700zM815.600 800H855V995H815.600zM1090 820H1129.400V995H1090zM1377.700 830H1417V995H1377.700zM1455.400 840H1495.600V910L1455.400 908zM1551 450H1572V607L1551 604z"/>
      </g>
      <g class="cols2">
        <path d="M1124.400 421.700H1129V512H1124.400zM1057.400 385H1063V885L1057.400 891.700zM567 800H571V995H567zM620 800H625V868L620 873.300zM855 800H859.600V995H855zM1129.400 820H1134V995H1129.400zM1417 830H1422V995H1417zM1495.600 840H1500V905L1495.600 910zM1572 450H1578V600L1572 607zM1547 205H1549V220H1547z"/>
      </g>
      <!-- left wall -->
      <path d="M591 170.700L604 172L479 713L479 631z" fill="#7a7a7a"/>
      <path d="M604 172L609 173L612 183L479 738L479 713z" fill="#696969"/>
      <path d="M612 178L700 150H734L612 184z" fill="#b0b0b0"/>
      <path d="M1505 150H1515L1549 162V166z" fill="#a8a8a8"/>
      <!-- roof -->
      <path d="M612 184L734 150H1505L1582 178V380L1530 580L1474.500 810L1470.700 821.700L1250.700 743.700L1015 808.300L1080.400 539.300L1176 513L1315.700 475L1035 375L755 451.700L989 535L981 580L924 803L688.600 720.700L479 778V738z" fill="#3f3f3f"/>
      <path d="M1086 150L1035 375L1315.700 475L1582 380V178L1505 150z" fill="#424242"/>
      <path d="M755 451.700L989 535L981 580L924 803L688.600 720.700z" fill="#3d3d3d"/>
      <path d="M1080.400 539.300L1176 513L1315.700 475L1250.700 743.700L1015 808.300z" fill="#3d3d3d"/>
      <path d="M989 535L981 580L924 818V803L973.700 580z" fill="#2a2a2a"/>
      <path d="M755 451.700L1035 375L1315.700 475L1291 481.700L1035 390L778.500 460z" fill="#5e5e5e"/>
      <!-- lower bands -->
      <path d="M479 793L688.600 736L918 817L906.700 845.700L688.600 769L479 827z" fill="#c4c4c4"/>
      <path d="M479 778L688.600 720.700L924 803V818L688.600 736L479 793z" fill="#5e5e5e"/>
      <path d="M567 802.700L689.700 769L815 814V822.700L694 780L567 816z" fill="#2cd22c"/>
      <path d="M1015 823.300L1250.700 759.300L1478 841V846.700L1470 869.300L1251.400 792L1033 851.700L1021 823z" fill="#c4c4c4"/>
      <path d="M1015 808.300L1250.700 743.700L1486 828V843L1250.700 759.300L1015 823.300z" fill="#5e5e5e"/>
      <path d="M1129.400 826L1251.400 792L1377.700 837.300V849.300L1252.600 801.700L1129.400 836z" fill="#2cd22c"/>
      <!-- right wall -->
      <path d="M1582 380L1530 580L1474.500 810L1493.700 815L1543 580L1582 420z" fill="#828282"/>
      <path d="M1582 420L1543 580L1493.700 815V841.700L1556.800 580L1582 433z" fill="#6f6f6f"/>
      <path d="M1470.700 821.700L1474.500 810L1493.700 815L1486 828z" fill="#dcdcdc"/>
      <path d="M1486 828L1493.700 815V841.700L1486 840z" fill="#d0d0d0"/>
      <!-- recesses on the roof -->
      <g>
        <path class="sq" d="M655 171.700L676.300 172.700L672.500 188.300L652 188.300z"/><path class="sq2" d="M652 188.300H672.500L652 194z"/>
        <path class="sq" d="M585 462.300L606.300 463.300L601.300 484.300L580.300 483.300z"/><path class="sq2" d="M580.300 483.300L601.300 484.300L580.300 490z"/>
        <path class="sq" d="M1023 345L1062.400 346.700L1057.400 363.300L1018.400 362.700z"/><path class="sq2" d="M1018.400 362.700L1057.400 363.300V370L1036.400 364L1018.400 368.300z"/>
        <path class="sq" d="M1478.400 499L1500 500L1495.600 521L1474.500 514z"/><path class="sq2" d="M1474.500 514L1495.600 521V527.300L1474.500 520z"/>
        <path class="sq" d="M531.700 733.300L552.700 734.300L548 749.300L527.800 749.300z"/><path class="sq2" d="M527.800 749.300H548L527.800 755z"/>
        <path class="sq" d="M839 740L860 741L855 761.700L834 755z"/><path class="sq2" d="M834 755L855 761.700V768.300L834 761z"/>
        <path class="sq" d="M1095 751L1116 751.700L1111 771.700L1090 771.700z"/><path class="sq2" d="M1090 771.700H1111L1090 778.300z"/>
        <path class="sq" d="M1400.700 763.300L1422 764L1417 785.700L1397 780z"/><path class="sq2" d="M1397 780L1417 785.700V791.700L1397 785z"/>
      </g>
      <!-- circle overlay -->
      <g fill="none" stroke="#9a9a9a">
        <circle cx="1030" cy="573" r="406"/>
        <circle cx="1030.500" cy="167" r="30"/>
        <circle cx="622.300" cy="573" r="29.500"/>
        <circle cx="1437" cy="573" r="29.500"/>
        <circle cx="1030" cy="980" r="30"/>
      </g>
      <!-- axes -->
      <text class="axz" x="522" y="918">Z</text>
      <path d="M527.800 922L522 936H526V944H530V936H534z" fill="#0a2ef0"/>
      <text class="axx" x="486" y="949">X</text>
      <path d="M499 943L510 937V941H528V946H510V949z" fill="#f01010"/>
      <rect x="524" y="944" width="7" height="6" fill="#bbb"/>
      <path d="M526 948C532 950 532 958 527 960L524 966C523 962 521 958 522 953C522 950 524 949 526 948z" fill="#16e016"/>
      <!-- annotations -->
      <g fill="none" stroke="#fff" stroke-width="2">
        <path d="M1003.500 302.700L591 416M649 379.300L591 416L638 425"/>
        <path d="M1110 296L1522.400 443.300M1476.500 402.700L1522.400 443.300L1465 447.700"/>
        <path d="M745.200 594.300L932.700 661M893.300 626.700L932.700 661L884.500 665"/>
        <path d="M1259.500 615.700L1072 666.700M1120.500 636L1072 666.700L1111 674.700"/>
      </g>
      <rect x="713.500" y="342.700" width="643" height="232.600" rx="1" fill="none" stroke="#f0190f" stroke-width="3"/>
    </svg>
    <div class="float">
      <svg class="fi sphere" viewBox="0 0 24 20"><ellipse cx="12" cy="10" rx="9" ry="9" fill="#d7dfe9" stroke="#5d6570"/><ellipse cx="10" cy="8" rx="4" ry="3" fill="#fff"/><path d="M2 16C8 16 20 9 22 3" stroke="#3e4650" fill="none"/><circle cx="20" cy="4" r="3" fill="#b8c2ce" stroke="#5d6570"/></svg>
      <div class="f2d">2D</div>
      <svg class="fi cube" viewBox="0 0 24 24"><path d="M1 5h18v18H1z" fill="#cfe4fb" stroke="#2f3842"/><path d="M1 5l4-4h18v18l-4 4M19 5l4-4" stroke="#2f3842" fill="none"/><path d="M5 1v18h18M5 19l-4 4" stroke="#6e7884" fill="none"/></svg>
      <i class="car dark"></i>
      <svg class="fi cube" viewBox="0 0 24 24"><path d="M1 5l4-4h18v18l-4 4zM19 5l4-4" fill="#8ea0b6" stroke="#2f3842"/><path d="M1 5h18v18H1z" fill="#7e92aa" stroke="#2f3842"/></svg>
      <i class="car dark"></i>
      <svg class="fi cube" viewBox="0 0 24 24"><path d="M21 12a9.500 9.500 0 1 1-3-7" stroke="#2f3842" stroke-width="1.800" fill="none"/><path d="M15 6l6 0 0-6z" fill="#2f3842"/></svg>
      <i class="car dark"></i>
      <div class="fsep"></div>
      <svg class="fi cube" viewBox="0 0 24 24"><rect x="0.500" y="0.500" width="23" height="23" fill="#7e92aa" stroke="#2f3842"/><path d="M0 4h24M12 4v20" stroke="#2f3842"/><path d="M4 8h3v3H4zM4 13h3v3H4zM4 18h3v3H4zM15 8h3v3h-3zM15 13h3v3h-3zM15 18h3v3h-3zM8 9h3M8 14h3M8 19h3M19 9h3M19 14h3M19 19h3" stroke="#1e2730" fill="none"/></svg>
    </div>
  </section>

  <aside class="disp">
    <div class="ptitle"><span class="x">×</span></div>
    <div class="phead grayname">显示设置</div>
    <div class="dtabs"><span class="dtab on">图元显示</span><span class="dtab">楼层显示</span></div>
    <div class="dtable">
      <div class="dr dh"><span>图层构件</span><span class="hl">显示图元</span><span>显示名称</span></div>
      <div class="dr root"><span class="nm"><i class="exp"></i>所有构件</span><span class="cell focus"><i class="cb half"></i></span><span class="cell"><i class="cb"></i></span></div>
      <div class="dr grp-r"><span class="nm"><i class="exp"></i>轴线</span><span class="cell"><i class="cb on"></i></span><span class="cell"><i class="cb off"></i></span></div>
      <div class="dr kid"><span class="nm">轴网</span><span class="cell"><i class="cb on"></i></span><span class="cell"><i class="cb off"></i></span></div>
      <div class="dr kid last"><span class="nm">辅助轴线</span><span class="cell"><i class="cb on"></i></span><span class="cell"><i class="cb off"></i></span></div>
      <div class="dr grp-r"><span class="nm"><i class="exp"></i>柱</span><span class="cell"><i class="cb on"></i></span><span class="cell"><i class="cb"></i></span></div>
      <div class="dr kid"><span class="nm">柱</span><span class="cell"><i class="cb on"></i></span><span class="cell"><i class="cb"></i></span></div>
      <div class="dr kid"><span class="nm">构造柱</span><span class="cell"><i class="cb on"></i></span><span class="cell"><i class="cb"></i></span></div>
      <div class="dr kid"><span class="nm">砌体柱</span><span class="cell"><i class="cb on"></i></span><span class="cell"><i class="cb"></i></span></div>
      <div class="dr kid last"><span class="nm">约束边缘非阴影区</span><span class="cell"><i class="cb on"></i></span><span class="cell"><i class="cb"></i></span></div>
      <div class="dr grp-r"><span class="nm"><i class="exp"></i>墙</span><span class="cell"><i class="cb half"></i></span><span class="cell"><i class="cb"></i></span></div>
      <div class="dr kid"><span class="nm">剪力墙</span><span class="cell"><i class="cb on"></i></span><span class="cell"><i class="cb"></i></span></div>
      <div class="dr kid"><span class="nm">人防门框墙</span><span class="cell"><i class="cb on"></i></span><span class="cell"><i class="cb"></i></span></div>
      <div class="dr kid"><span class="nm">砌体墙</span><span class="cell"><i class="cb on"></i></span><span class="cell"><i class="cb"></i></span></div>
      <div class="dr kid"><span class="nm">砌体加筋</span><span class="cell"><i class="cb"></i></span><span class="cell"><i class="cb"></i></span></div>
      <div class="dr kid"><span class="nm">保温墙</span><span class="cell"><i class="cb on"></i></span><span class="cell"><i class="cb"></i></span></div>
      <div class="dr kid"><span class="nm">暗梁</span><span class="cell"><i class="cb"></i></span><span class="cell"><i class="cb"></i></span></div>
      <div class="dr kid"><span class="nm">墙垛</span><span class="cell"><i class="cb on"></i></span><span class="cell"><i class="cb"></i></span></div>
      <div class="dr kid last"><span class="nm">幕墙</span><span class="cell"><i class="cb on"></i></span><span class="cell"><i class="cb"></i></span></div>
      <div class="dr grp-r"><span class="nm"><i class="exp"></i>门窗洞</span><span class="cell"><i class="cb half"></i></span><span class="cell"><i class="cb"></i></span></div>
      <div class="dr kid"><span class="nm">门</span><span class="cell"><i class="cb on"></i></span><span class="cell"><i class="cb"></i></span></div>
      <div class="dr kid"><span class="nm">窗</span><span class="cell"><i class="cb on"></i></span><span class="cell"><i class="cb"></i></span></div>
      <div class="dr kid"><span class="nm">门联窗</span><span class="cell"><i class="cb on"></i></span><span class="cell"><i class="cb"></i></span></div>
      <div class="dr kid"><span class="nm">墙洞</span><span class="cell"><i class="cb on"></i></span><span class="cell"><i class="cb"></i></span></div>
      <div class="dr kid"><span class="nm">带形窗</span><span class="cell"><i class="cb on"></i></span><span class="cell"><i class="cb"></i></span></div>
      <div class="dr kid"><span class="nm">带形洞</span><span class="cell"><i class="cb on"></i></span><span class="cell"><i class="cb"></i></span></div>
      <div class="dr kid"><span class="nm">飘窗</span><span class="cell"><i class="cb on"></i></span><span class="cell"><i class="cb"></i></span></div>
      <div class="dr kid"><span class="nm">老虎窗</span><span class="cell"><i class="cb"></i></span><span class="cell"><i class="cb"></i></span></div>
      <div class="dr kid"><span class="nm">过梁</span><span class="cell"><i class="cb"></i></span><span class="cell"><i class="cb"></i></span></div>
      <div class="dr kid last"><span class="nm">壁龛</span><span class="cell"><i class="cb"></i></span><span class="cell"><i class="cb"></i></span></div>
      <div class="dr grp-r"><span class="nm"><i class="exp"></i>梁</span><span class="cell"><i class="cb half"></i></span><span class="cell"><i class="cb"></i></span></div>
      <div class="dr kid"><span class="nm">梁</span><span class="cell"><i class="cb on"></i></span><span class="cell"><i class="cb"></i></span></div>
      <div class="dr kid"><span class="nm">连梁</span><span class="cell"><i class="cb on"></i></span><span class="cell"><i class="cb"></i></span></div>
      <div class="dr kid last"><span class="nm">圈梁</span><span class="cell"><i class="cb"></i></span><span class="cell"><i class="cb"></i></span></div>
      <div class="dr grp-r"><span class="nm"><i class="exp"></i>板</span><span class="cell"><i class="cb half"></i></span><span class="cell"><i class="cb"></i></span></div>
      <div class="dr kid"><span class="nm"></span><span class="cell"><i class="cb on"></i></span><span class="cell"><i class="cb"></i></span></div>
      <div class="dscroll"></div>
    </div>
    <div class="dfoot"><button class="reset">恢复默认设置</button></div>
  </aside>
</main>

<footer class="status">
  <span class="s-coord">7259 Y = 21465 Z = 16923</span>
  <span class="s-h">层高： 3</span>
  <span class="s-l">标高： 7.06~10.06</span>
  <span class="s-n">0</span>
  <span class="s-hid">隐藏： 0</span>
  <span class="sb w25"><svg class="sbi" viewBox="0 0 16 16"><path d="M4 0v16M4 8h7v8" stroke="#333" fill="none"/></svg></span>
  <span class="sb w35 act"><svg class="sbi" viewBox="0 0 16 16"><rect x="2" y="3" width="12" height="16" fill="none" stroke="#4a90d9"/><rect x="0" y="0" width="5" height="5" fill="#f59a3a"/></svg><i class="car"></i></span>
  <span class="sb w25"><svg class="sbi" viewBox="0 0 16 16"><path d="M2 1l12 14M14 1L2 15" stroke="#999"/></svg></span>
  <span class="sb w35"><svg class="sbi" viewBox="0 0 16 16"><path d="M1 15L13 3" stroke="#333"/><circle cx="7" cy="9" r="2" fill="#333"/></svg><i class="car"></i></span>
  <span class="sb w36 act"><svg class="sbi" viewBox="0 0 16 16"><path d="M3 1v8M0 5h8" stroke="#4a90d9"/><rect x="6" y="11" width="10" height="5" fill="#4a90d9"/></svg><i class="car"></i></span>
  <span class="sb w73 act txt on">跨图层选择</span>
  <span class="sb w61 txt">折线选择</span>
  <span class="s-msg">按鼠标左键指定第一个角点，或拾取构件图元</span>
  <span class="s-fps">1000 FPS</span>
</footer>
</body>
</html>
```
FILE: styles.css
```css
* { box-sizing: border-box; }
html, body { margin: 0; padding: 0; }
body {
  width: 1890px; height: 1015px; overflow: hidden; background: #fff;
  display: flex; flex-direction: column; position: relative;
  font: 12px/1.2 "Noto Sans CJK SC", "Liberation Sans", sans-serif; color: #1a1a1a;
}
i { font-style: normal; }
.defs { position: absolute; width: 0; height: 0; overflow: hidden; }
.ic { width: 16px; height: 16px; flex: none; }
.ic12 { width: 12px; height: 12px; flex: none; }
.ic30 { width: 30px; height: 30px; flex: none; }
.gray { color: #bbb; }
.blue { color: #4a9be0; }

.app-btn {
  position: absolute; left: 0; top: 0; width: 10px; height: 25px; z-index: 2;
  background: linear-gradient(#8fcdfa, #cfe9fc); border-bottom-right-radius: 3px;
}

.titlebar { height: 7px; overflow: hidden; flex: none; display: flex; }
.qa { width: 340px; height: 7px; flex: none; }
.title-text { display: block; margin: -13px 0 0 336px; font-size: 13px; line-height: 16px; white-space: nowrap; }

.tabbar {
  height: 19px; flex: none; display: flex; align-items: flex-end;
  border-bottom: 1px solid #d8d8d8; position: relative;
}
.tabs { display: flex; margin-left: 23px; height: 18px; }
.tab { padding: 0 13px; line-height: 18px; color: #333; white-space: nowrap; }
.tab.on { background: #5aa9f6; color: #fff; border-radius: 3px 3px 0 0; }
.topright { margin-left: auto; display: flex; align-items: center; align-self: flex-start; height: 18px; padding-right: 3px; }
.qsearch {
  width: 244px; height: 17px; border: 1px solid #c4c4c4; display: flex; align-items: center;
  justify-content: space-between; padding: 0 6px 0 2px; color: #bdbdbd; margin-right: 8px; line-height: 15px;
}
.avatar { width: 16px; height: 16px; margin-right: 3px; flex: none; }
.uname { width: 44px; font-size: 13px; color: #222; margin-right: 18px; white-space: nowrap; }
.tico { width: 14px; height: 14px; flex: none; margin-right: 9px; }
.lastico { margin-right: 0; }
.help { width: 14px; color: #888; font: 15px "Liberation Sans", sans-serif; margin-right: 10px; white-space: nowrap; }
.car {
  display: inline-block; width: 0; height: 0; margin-left: 5px; vertical-align: middle;
  border-left: 3.5px solid transparent; border-right: 3.5px solid transparent; border-top: 4px solid #666;
}
.car.small { border-top-color: #aaa; margin-left: 2px; }
.car.lone { margin-left: 0; border-top-color: #aaa; }
.car.dark { display: block; margin: 6px 0 7px; border-top-color: #3a434e; flex: none; }

.ribbon {
  height: 97px; flex: none; display: flex; border-bottom: 2px solid #8f9297;
  background: linear-gradient(#fff 0, #fff 62%, #eceeef 100%);
}
.grp { position: relative; display: flex; flex-direction: column; flex: none; padding-top: 3px; }
.grp::after { content: ""; position: absolute; right: 0; top: 2px; bottom: 2px; width: 1px; background: #d2d3d5; }
.g0 { width: 120px; } .g1 { width: 194px; padding-left: 8px; } .g2 { width: 276px; padding-left: 8px; }
.g3 { width: 237px; padding-left: 8px; } .g4 { width: 118px; padding-left: 5px; } .g5 { width: 104px; padding-left: 5px; }
.g6 { width: 232px; padding-left: 6px; }
.gbody { display: flex; height: 70px; }
.glabel { height: 22px; margin-top: 1px; line-height: 22px; text-align: center; color: #222; white-space: nowrap; }
.g1 .glabel, .g2 .glabel, .g3 .glabel { margin-left: -8px; padding-right: 5px; }
.lbl0 { padding-right: 32px; }
.lbl4 { padding-right: 9px; margin-left: -5px; }
.g5 .glabel { margin-top: 2px; margin-left: -3px; }
.g6 .glabel { margin-top: 2px; margin-left: -2px; }
.col { display: flex; flex-direction: column; flex: none; }
.row { height: 23px; display: flex; align-items: center; gap: 3px; white-space: nowrap; color: #1a1a1a; }
.row .car { margin-left: 5px; }
.dis, .row.dis { color: #bcbcbc; }
.w94 { width: 94px; margin-left: 11px; } .w79 { width: 79px; } .w66 { width: 66px; } .w111 { width: 111px; }
.w54 { width: 54px; } .w78 { width: 78px; } .ml5 { margin-left: 5px; }
.smallcol { width: 20px; margin-left: 4px; align-items: center; }
.big { display: flex; flex-direction: column; align-items: center; flex: none; text-align: center; line-height: 17px; }
.big .ic30 { margin-top: 2px; }
.w38 { width: 38px; } .w38 + .w38 { margin-left: 4px; }
.w46 { width: 46px; } .w50 { width: 50px; }
.biglbl { margin-top: 6px; white-space: nowrap; }
.clipped { width: 15px; overflow: hidden; align-items: flex-end; }
.cbig { width: 15px; height: 30px; margin-top: 1px; flex: none; }
.clipt { margin-top: 8px; margin-right: 1px; }

.toolbar {
  height: 27px; flex: none; background: #c8cbd0; display: flex; align-items: center; gap: 3.500px; padding-top: 1px;
}
.sel {
  width: 98.500px; height: 21.500px; background: #fff; border: 1px solid #dcdfe3; display: flex; align-items: center;
  justify-content: space-between; padding: 0 4px; font-size: 13px; flex: none;
}
.sel .car { margin-left: auto; }
.sel.first { width: 75px; border-color: #5b9be6; padding-left: 0; margin-right: -1px; }

.main { height: 845px; flex: none; display: flex; background: #fff; border-top: 1px solid #8b9096; position: relative; }
.ptitle {
  height: 13px; flex: none; background: #d3d5d9; display: flex; justify-content: flex-end; align-items: center; padding-right: 4px;
  color: #777; font: bold 13px/13px "Liberation Sans", sans-serif; border-bottom: 1px solid #c6c8cc;
}
.x { display: block; }
.phead { height: 21px; flex: none; background: #f0f0f0; border-bottom: 2px solid #c8c8c8; line-height: 20px; overflow: hidden; white-space: nowrap; }

.nav { width: 184px; flex: none; border-right: 1px solid #c8c8c8; display: flex; flex-direction: column; }
.navname { display: block; margin-left: -19px; color: #666; }
.navtools { height: 32px; flex: none; background: #f0f0f0; border-bottom: 2px solid #d2d2d2; display: flex; justify-content: flex-end; align-items: flex-start; gap: 4px; padding: 3px 1px 0 0; }
.vbtn { width: 22px; height: 24px; border: 1px solid #6aa9ec; border-radius: 4px; background: #e5eefb; display: flex; align-items: center; justify-content: center; }
.navlist { flex: 1; padding-top: 3px; overflow: hidden; position: relative; }
.ni { height: 21px; margin: 0 0 3px 14px; width: 140px; padding-left: 3px; display: flex; align-items: center; gap: 6px; white-space: nowrap; color: #1a1a1a; }
.ni.cat { margin-left: -3px; padding-left: 0; }
.ni.sel-item { background: #c6d8ef; }
.scrollthumb { position: absolute; left: 172px; top: 122px; width: 8px; height: 379px; background: #cbcbcb; border-radius: 4px; }

.mid { width: 286px; margin-left: 4px; flex: none; display: flex; flex-direction: column; border-left: 1px solid #b9b9b9; border-right: 1px solid #b9b9b9; }
.msec { display: flex; flex-direction: column; }
.msec.top { height: 466px; }
.msec.bot { flex: 1; min-height: 0; }
.mtabs { height: 23px; flex: none; display: flex; background: #f0f0f0; border-bottom: 1px solid #c6c6c6; }
.mtab { width: 64.500px; text-align: center; line-height: 22px; color: #888; background: #dcdcdc; border-right: 1px solid #c6c6c6; border-bottom: 1px solid #c6c6c6; font-weight: 500; font-size: 12px; }
.mtab.on { background: #f0f0f0; color: #222; border-bottom: 0; }
.mtools { height: 31px; flex: none; background: #f0f0f0; border-bottom: 2px solid #d2d2d2; display: flex; align-items: center; padding-left: 5px; }
.mt { display: flex; align-items: center; gap: 3px; margin-right: 10px; white-space: nowrap; }
.mt .car { margin-left: 1px; }
.mt:first-child { margin-right: 11px; }
.more { margin-left: auto; margin-right: 4px; width: 7px; height: 8px; border-left: 3px solid #333; border-top: 4px solid transparent; border-bottom: 4px solid transparent; position: relative; }
.more::after { content: ""; position: absolute; left: 1px; top: -4px; border-left: 3px solid #333; border-top: 4px solid transparent; border-bottom: 4px solid transparent; }
.msearch { height: 20px; flex: none; display: flex; align-items: center; justify-content: space-between; padding: 0 8px 0 2px; color: #999; border-bottom: 2px solid #d2d2d2; }
.mlist { flex: 1; padding: 3px 0 0 20px; }
.mitem { display: block; width: 43px; height: 21px; line-height: 20px; text-align: center; background: #bdd0ec; }
.ptable { flex: 1; background: linear-gradient(90deg, #f0f0f0 22px, #fff 22px); }
.pr { display: grid; grid-template-columns: 22px 101px 119px 40px; height: 21px; line-height: 20px; text-align: center; }
.pr span { border-right: 1px solid #d2d2d2; border-bottom: 1px solid #d2d2d2; }
.ph span { background: #f0f0f0; color: #444; }
.pb span { background: #fff; }
.pb .rn { background: #f0f0f0; color: #46648a; font-family: "Liberation Sans", sans-serif; }
.pb .grayc { background: #ebebeb; }

.canvas { width: 1103px; margin-left: 5px; flex: none; position: relative; overflow: hidden; }
.scene { display: block; width: 1103px; height: 845px; }
.bub circle { fill: none; stroke: #0e7a12; }
.bubt text { fill: #fff; font: 18px "Liberation Sans", sans-serif; text-anchor: middle; }
.up text, text.up { fill: #e8e8e8; font: 300 20px "Noto Sans CJK SC", sans-serif; }
text.small { font-size: 14px; }
.dim3000 { fill: #fff; font: 21px "Noto Sans", sans-serif; }
.tt { fill: #ddd; font: 16px "Liberation Sans", sans-serif; letter-spacing: 3px; }
.cols path { fill: #8000ff; }
.cols2 path { fill: #3d0f7e; }
.sq { fill: #5000a8; }
.sq2 { fill: #8000ff; }
.axz { fill: #0a2ef0; font: 17px "Liberation Sans", sans-serif; }
.axx { fill: #f01010; font: 17px "Liberation Sans", sans-serif; }

.float {
  position: absolute; right: 0; top: 0; width: 33px; height: 227px; background: #8c939c; border: 1px solid #b4b8be;
  display: flex; flex-direction: column; align-items: center; padding-top: 11px;
}
.fi { flex: none; }
.sphere { width: 24px; height: 20px; margin-bottom: 9px; }
.cube { width: 24px; height: 24px; }
.f2d { width: 23px; height: 23px; background: #7e92aa; border: 1px solid #2f3842; margin-bottom: 5px; font: 9px/1 "Liberation Sans", sans-serif; color: #1c242d; text-align: right; padding: 12px 1px 0 0; flex: none; }
.fsep { width: 23px; height: 1px; background: #5f666f; margin: -5px 0 4px; flex: none; }

.disp { flex: 1; min-width: 0; margin-left: 5px; border-left: 1px solid #c8c8c8; display: flex; flex-direction: column; border-bottom: 1px solid #c8c8c8; }
.grayname { color: #777; padding-left: 8px; }
.dtabs { height: 31px; flex: none; display: flex; gap: 3px; padding: 3px 0 0 2px; align-items: flex-start; }
.dtab { width: 74px; height: 22px; line-height: 22px; text-align: center; background: #e1e1e1; color: #666; border-radius: 3px 3px 0 0; margin-top: 2px; }
.dtab.on { width: 76px; height: 25px; margin-top: 0; background: #fff; color: #2e8cf0; border: 1px solid #c8c8c8; border-bottom: 0; line-height: 23px; }
.dtable { margin-left: 1px; width: 297px; height: 739px; overflow: hidden; border-left: 1px solid #c8c8c8; border-bottom: 2px solid #c8c8c8; border-top: 1px solid #c8c8c8; position: relative; flex: none; margin-top: -1px; }
.dr { display: grid; grid-template-columns: 158px 64px 63px; height: 21px; width: 285px; }
.dr > span { border-right: 1px solid #d4d4d4; border-bottom: 1px solid #d4d4d4; display: flex; align-items: center; white-space: nowrap; color: #1a1a1a; }
.dh > span { justify-content: center; background: #f0f0f0; color: #444; }
.dh > .hl { background: #75b2f5; color: #fff; }
.cell { justify-content: center; }
.cell.focus { box-shadow: inset 0 0 0 2px #808080; }
.nm { background-repeat: no-repeat; }
.root .nm { padding-left: 2px; }
.grp-r .nm { padding-left: 11px; background-image: linear-gradient(#dedede, #dedede); background-position: 8px 0; background-size: 1px 100%; }
.kid .nm {
  padding-left: 40px;
  background-image: linear-gradient(#dedede, #dedede), linear-gradient(#dedede, #dedede), linear-gradient(#dedede, #dedede);
  background-position: 18px 50%, 18px 0, 8px 0;
  background-size: 17px 1px, 1px 100%, 1px 100%;
}
.kid.last .nm { background-size: 17px 1px, 1px 50%, 1px 100%; }
.exp { width: 12px; height: 12px; flex: none; margin-right: 7px; border: 1px solid #888; border-radius: 2px; background: linear-gradient(#555, #555) center / 6px 1px no-repeat #fff; }
.cb { display: flex; align-items: center; justify-content: center; width: 14px; height: 14px; border: 1px solid #8a8a8a; border-radius: 3px; background: #fff; }
.cb.on { background: #5ba4fa; border-color: #5ba4fa; }
.cb.on::after { content: ""; width: 7px; height: 3px; border-left: 2px solid #fff; border-bottom: 2px solid #fff; transform: rotate(-45deg) translate(0, -1px); }
.cb.half { border-color: #8a8a8a; background: #fff; }
.cb.half::after { content: ""; width: 10px; height: 10px; background: #9cc2fb; border: 1px solid #5ba4fa; border-radius: 2px; }
.cb.off { background: #eee; border-color: #b5b5b5; }
.dscroll { position: absolute; left: 288px; top: 14px; width: 7px; height: 215px; border-radius: 4px; background: #cbcbcb; }
.dfoot { flex: 1; display: flex; justify-content: flex-end; align-items: flex-start; padding: 7px 7px 0 0; }
.reset { width: 89px; height: 26px; padding: 0; font: 12px "Noto Sans CJK SC", sans-serif; color: #222; background: #fff; border: 1px solid #ccc; border-radius: 4px; }

.status { height: 20px; flex: none; background: #dedfe1; display: flex; align-items: flex-start; overflow: hidden; color: #444; white-space: nowrap; }
.status > span { flex: none; }
.s-coord, .s-h, .s-l, .s-n, .s-hid, .s-msg, .s-fps { padding-top: 7px; line-height: 15px; }
.s-coord { width: 238px; font-family: "Noto Sans", sans-serif; font-size: 12px; letter-spacing: .5px; }
.s-h { width: 83px; } .s-l { width: 133px; } .s-n { width: 103px; } .s-hid { width: 103px; }
.sb { height: 18px; margin: 3px 3.500px 0 0; border: 1px solid #a9a9a9; border-bottom: 0; background: #d3d4d6; display: flex; align-items: flex-start; padding: 1px 0 0 3px; overflow: hidden; }
.sb.act { border-color: #2e8cf0; background: #fff; }
.sb .car { margin: 8px 0 0 4px; }
.sbi { width: 16px; height: 18px; flex: none; }
.w25 { width: 25px; } .w35 { width: 35.500px; } .w36 { width: 36px; } .w73 { width: 73px; } .w61 { width: 61px; }
.txt { padding: 3px 0 0; justify-content: center; line-height: 15px; }
.s-msg { margin-left: 3px; color: #222; }
.s-fps { margin-left: auto; margin-right: 26px; }
```
